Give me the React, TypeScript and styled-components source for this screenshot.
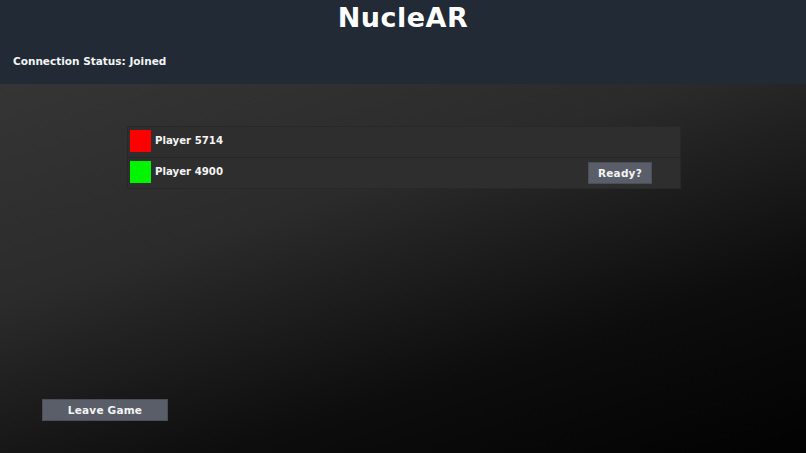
import React from 'react';
import styled, { createGlobalStyle } from 'styled-components';

const GlobalStyle = createGlobalStyle`
    html, body, #root {
        margin: 0;
        padding: 0;
        height: 100%;
    }
    body {
        background: #000;
        font-family: "DejaVu Sans", "Liberation Sans", sans-serif;
        color: #f2f2f2;
    }
`;

const Screen = styled.div`
    display: flex;
    flex-direction: column;
    width: 100%;
    height: 100%;
    overflow: hidden;
`;

const Header = styled.header`
    height: 84px;
    background: #212a35;
    display: flex;
    flex-direction: column;
    box-sizing: border-box;
    padding: 2px 13px 0;
`;

const Title = styled.h1`
    margin: 0;
    text-align: center;
    font-size: 27px;
    font-weight: 700;
    letter-spacing: 0.5px;
    color: #ffffff;
    line-height: 32px;
`;

const Status = styled.p`
    margin: 21px 0 0;
    font-size: 10.5px;
    font-weight: 700;
    color: #f4f4f4;
`;

const Lobby = styled.main`
    flex: 1;
    display: flex;
    flex-direction: column;
    justify-content: space-between;
    padding: 42px 0 32px;
    background: linear-gradient(162deg, #353535 0%, #2b2b2b 35%, #0d0d0d 70%, #020202 100%);
`;

const PlayerList = styled.ul`
    list-style: none;
    margin: 0 0 0 127px;
    padding: 0;
    width: 552px;
    border: 1px solid #282828;
`;

const PlayerRow = styled.li`
    display: flex;
    align-items: center;
    height: 30px;
    padding: 0 28px 0 2px;
    background: #2e2e2e;
    border-bottom: 1px solid #262626;
    &:last-child {
        border-bottom: none;
    }
`;

const Swatch = styled.span<{ $color: string }>`
    width: 21px;
    height: 22px;
    margin-top: -2px;
    background: ${p => p.$color};
    flex-shrink: 0;
`;

const PlayerName = styled.span`
    margin: -3px 0 0 4px;
    flex: 1;
    font-size: 10.2px;
    font-weight: 700;
    color: #f4f4f4;
`;

const Button = styled.button<{ $width: number }>`
    width: ${p => p.$width}px;
    height: 22px;
    border: 1px solid #4a4e58;
    background: #5a5e69;
    color: #f4f4f4;
    font-family: inherit;
    font-size: 10.5px;
    font-weight: 700;
    letter-spacing: 0.2px;
    padding: 0;
`;

const Footer = styled.div`
    padding-left: 42px;
`;

const players = [
    { name: 'Player 5714', color: '#ff0000', me: false },
    { name: 'Player 4900', color: '#00f500', me: true },
];

export default function App() {
    return (
        <Screen>
            <GlobalStyle />
            <Header>
                <Title>NucleAR</Title>
                <Status>Connection Status: Joined</Status>
            </Header>
            <Lobby>
                <PlayerList>
                    {players.map(p => (
                        <PlayerRow key={p.name}>
                            <Swatch $color={p.color} />
                            <PlayerName>{p.name}</PlayerName>
                            {p.me && <Button $width={64}>Ready?</Button>}
                        </PlayerRow>
                    ))}
                </PlayerList>
                <Footer>
                    <Button $width={126}>Leave Game</Button>
                </Footer>
            </Lobby>
        </Screen>
    );
}
